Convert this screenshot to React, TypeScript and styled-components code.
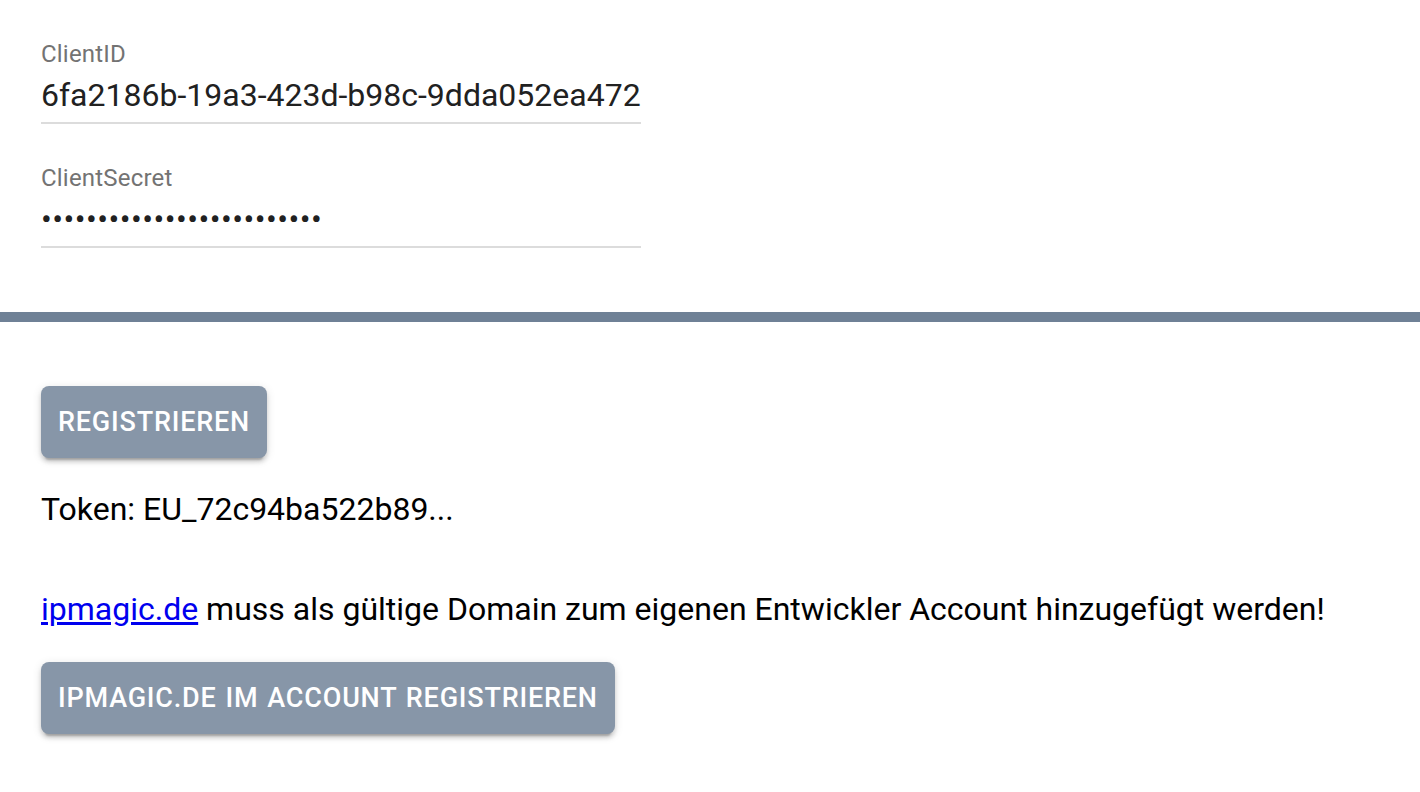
import React from "react";
import styled, { createGlobalStyle } from "styled-components";

const GlobalStyle = createGlobalStyle`
  html, body {
    margin: 0;
    padding: 0;
    background: #ffffff;
  }
  body {
    font-family: Roboto, "Liberation Sans", Arial, sans-serif;
    color: #000000;
  }
  * { box-sizing: border-box; }
`;

const Page = styled.div`
  display: flex;
  flex-direction: column;
  width: 1420px;
`;

const FieldSection = styled.section`
  display: flex;
  flex-direction: column;
  gap: 40px;
  padding: 40px 41px 64px;
`;

const Field = styled.label`
  display: flex;
  flex-direction: column;
  width: 600px;
  gap: 4px;
  border-bottom: 2px solid #dcdcdc;
  padding-bottom: 4px;
`;

const FieldLabel = styled.span`
  font-size: 24px;
  line-height: 28px;
  color: #737373;
  letter-spacing: 0.2px;
`;

const FieldInput = styled.input<{ $secret?: boolean }>`
  display: block;
  width: 100%;
  height: 46px;
  border: none;
  outline: none;
  background: transparent;
  padding: 0;
  margin: 0;
  font-family: Roboto, "Liberation Sans", Arial, sans-serif;
  font-size: 32px;
  line-height: 46px;
  color: #212121;
  letter-spacing: ${(p) => (p.$secret ? "0.45px" : "0")};
`;

const Divider = styled.hr`
  margin: 0;
  border: none;
  height: 10px;
  background: #6f8196;
`;

const ActionSection = styled.section`
  display: flex;
  flex-direction: column;
  align-items: flex-start;
  padding: 64px 41px 40px;
`;

const ActionButton = styled.button`
  height: 72px;
  padding: 0 17px;
  border: none;
  border-radius: 8px;
  background: #8796a8;
  color: #ffffff;
  font-family: Roboto, "Liberation Sans", Arial, sans-serif;
  font-weight: 500;
  font-size: 27px;
  letter-spacing: 0.8px;
  word-spacing: 1.5px;
  text-transform: uppercase;
  cursor: pointer;
  box-shadow: 0 6px 2px -4px rgba(0, 0, 0, 0.2), 0 4px 4px 0 rgba(0, 0, 0, 0.14),
    0 2px 10px 0 rgba(0, 0, 0, 0.12);
`;

const Text = styled.p<{ $top: number }>`
  margin: ${(p) => p.$top}px 0 0;
  font-size: 32px;
  line-height: 48px;
  color: #000000;
`;

const Link = styled.a`
  color: #0000ee;
  text-decoration: underline;
`;

const SecondButtonWrap = styled.div`
  margin-top: 29px;
`;

export default function App() {
  return (
    <Page>
      <GlobalStyle />
      <FieldSection>
        <Field>
          <FieldLabel>ClientID</FieldLabel>
          <FieldInput type="text" readOnly defaultValue="6fa2186b-19a3-423d-b98c-9dda052ea472" />
        </Field>
        <Field>
          <FieldLabel>ClientSecret</FieldLabel>
          <FieldInput $secret type="password" readOnly defaultValue="abcdefghijklmnopqrstuvwxy" />
        </Field>
      </FieldSection>
      <Divider />
      <ActionSection>
        <ActionButton>Registrieren</ActionButton>
        <Text $top={27}>Token: EU_72c94ba522b89...</Text>
        <Text $top={52}>
          <Link href="#">ipmagic.de</Link> muss als gültige Domain zum eigenen Entwickler Account hinzugefügt werden!
        </Text>
        <SecondButtonWrap>
          <ActionButton>ipmagic.de im Account registrieren</ActionButton>
        </SecondButtonWrap>
      </ActionSection>
    </Page>
  );
}
